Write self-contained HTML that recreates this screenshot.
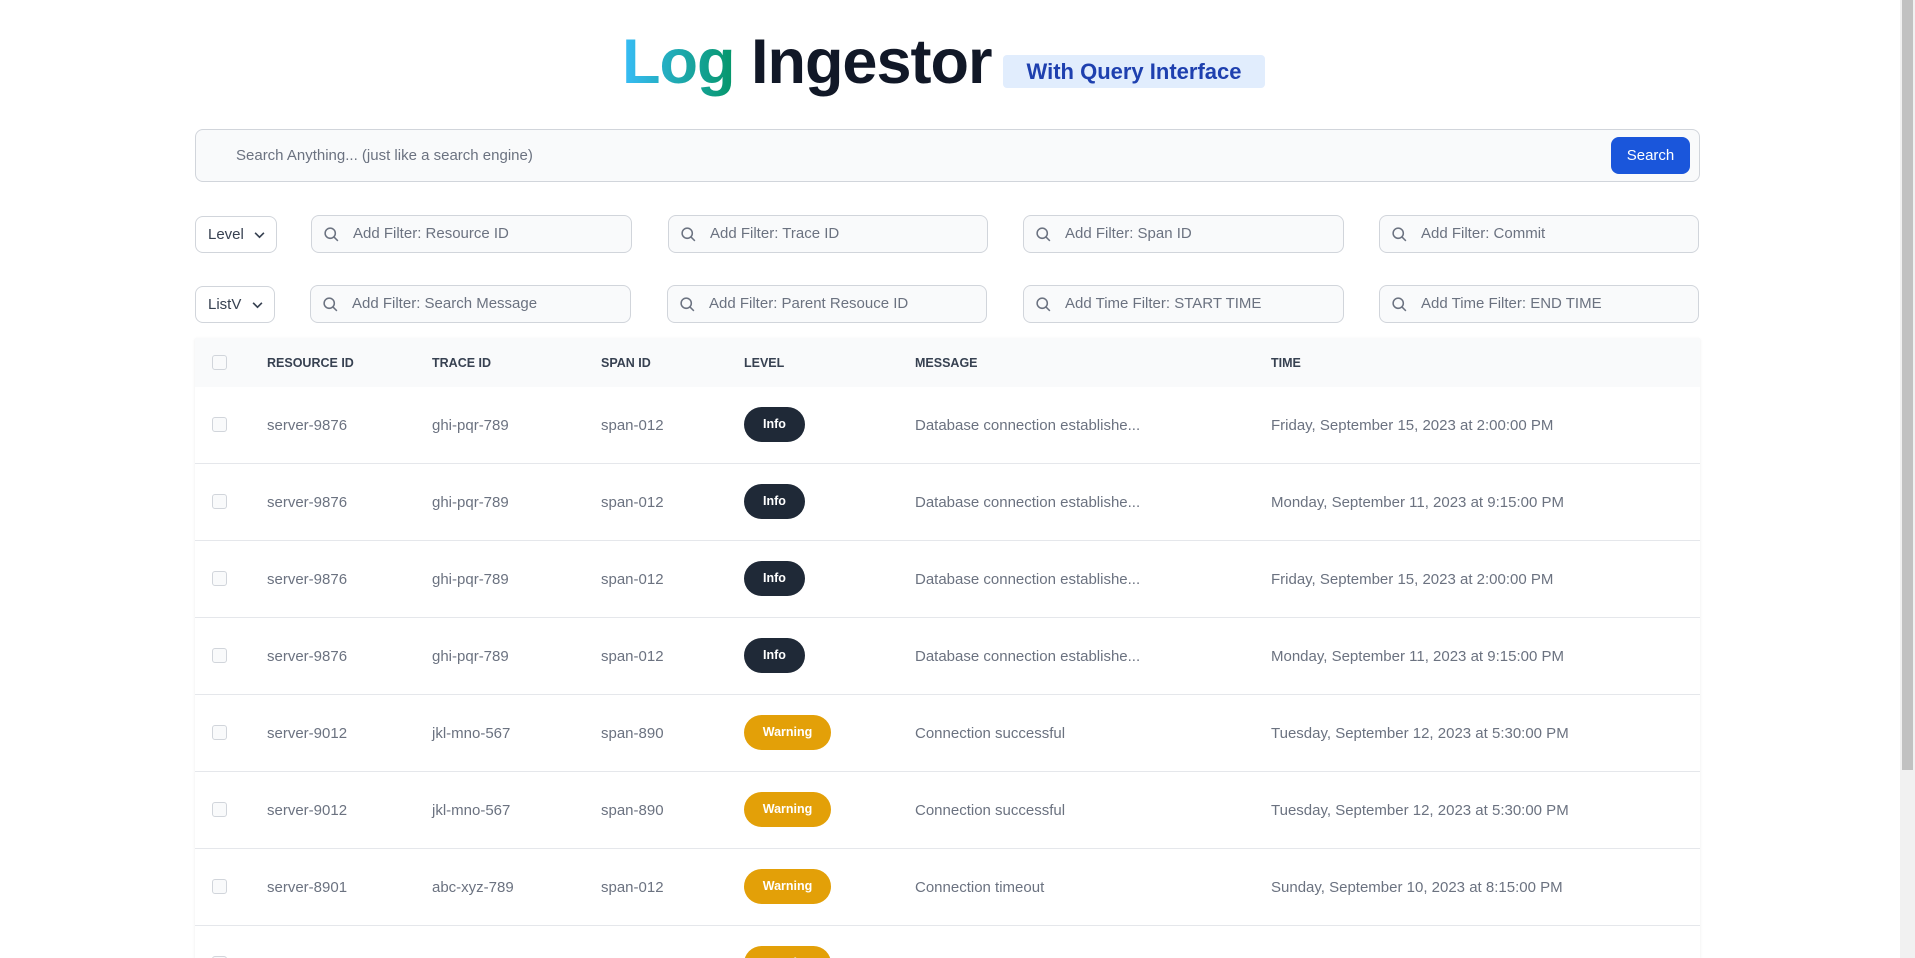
<!DOCTYPE html>
<html style="width:1915px;height:958px;overflow:hidden"><head><meta charset="utf-8"><style>
*{box-sizing:border-box;margin:0;padding:0}
body{width:1915px;height:958px;overflow:hidden;background:#fff;font-family:"Liberation Sans",sans-serif;position:relative}
.abs{position:absolute}
h1{position:absolute;left:622px;top:26px;font-size:63px;font-weight:700;color:#111827;letter-spacing:-1px;white-space:nowrap}
.grad{background:linear-gradient(90deg,#38bdf8,#059669);-webkit-background-clip:text;background-clip:text;color:transparent}
.badge{left:1003px;top:55px;width:262px;height:33px;background:#e1edfd;border-radius:4px;color:#1e40af;font-size:22px;font-weight:700;line-height:33px;text-align:center}
.search{left:195px;top:129px;width:1505px;height:53px;background:#f9fafb;border:1px solid #d1d5db;border-radius:8px}
.search span{position:absolute;left:40px;top:17px;font-size:15px;color:#6b7280}
.btn{position:absolute;left:1415px;top:7px;width:79px;height:37px;background:#1a56db;border-radius:8px;color:#fff;font-size:15px;text-align:center;line-height:37px}
.sel{height:37px;border:1px solid #d1d5db;border-radius:8px;background:#fff;font-size:15px;color:#374151;padding-left:12px;line-height:35px}
.sel svg{position:absolute;right:11px;top:14px}
.inp{height:38px;border:1px solid #d1d5db;border-radius:8px;background:#f9fafb;font-size:15px;color:#6b7280;line-height:36px;padding-left:41px}
.inp svg{position:absolute;left:11px;top:10px}
.table{left:195px;top:338px;width:1505px;height:620px;overflow:hidden;box-shadow:0 1px 3px rgba(0,0,0,.08)}
.hd{position:absolute;left:0;top:0;width:1505px;height:49px;background:#f9fafb}
.th{position:absolute;top:18px;font-size:12.5px;font-weight:700;color:#374151}
.row{position:absolute;left:0;width:1505px;height:77px;border-bottom:1px solid #e5e7eb}
.td{position:absolute;top:30px;font-size:15px;color:#6b7280;white-space:nowrap}
.cb{position:absolute;left:17px;width:15px;height:15px;border:1px solid #d1d5db;border-radius:3px;background:#f9fafb}
.lv{position:absolute;left:549px;top:20px;height:35px;border-radius:18px;color:#fff;font-size:12.5px;font-weight:700;text-align:center;line-height:35px}
.info{width:61px;background:#1f2937}.warn{width:87px;background:#e3a008}
.sb{left:1900px;top:0;width:15px;height:958px;background:#f1f1f1}
.sb div{position:absolute;left:2px;top:0;width:11px;height:770px;background:#c1c1c1}
</style></head><body>
<h1><span class="grad">Log</span> Ingestor</h1>
<div class="abs badge">With Query Interface</div>
<div class="abs search"><span>Search Anything... (just like a search engine)</span><div class="btn">Search</div></div>

<div class="abs sel" style="left:195px;top:216px;width:82px">Level<svg width="11" height="8" viewBox="0 0 10 6"><path d="M1 1l4 4 4-4" stroke="#374151" stroke-width="1.5" fill="none"/></svg></div>
<div class="abs sel" style="left:195px;top:286px;width:80px">ListV<svg width="11" height="8" viewBox="0 0 10 6"><path d="M1 1l4 4 4-4" stroke="#374151" stroke-width="1.5" fill="none"/></svg></div>

<div class="abs inp" style="left:311px;top:215px;width:321px"><svg width="17" height="17" viewBox="0 0 20 20"><circle cx="8.5" cy="8.5" r="6" stroke="#6b7280" stroke-width="1.8" fill="none"/><path d="M13 13l4.5 4.5" stroke="#6b7280" stroke-width="1.8"/></svg>Add Filter: Resource ID</div>
<div class="abs inp" style="left:668px;top:215px;width:320px"><svg width="17" height="17" viewBox="0 0 20 20"><circle cx="8.5" cy="8.5" r="6" stroke="#6b7280" stroke-width="1.8" fill="none"/><path d="M13 13l4.5 4.5" stroke="#6b7280" stroke-width="1.8"/></svg>Add Filter: Trace ID</div>
<div class="abs inp" style="left:1023px;top:215px;width:321px"><svg width="17" height="17" viewBox="0 0 20 20"><circle cx="8.5" cy="8.5" r="6" stroke="#6b7280" stroke-width="1.8" fill="none"/><path d="M13 13l4.5 4.5" stroke="#6b7280" stroke-width="1.8"/></svg>Add Filter: Span ID</div>
<div class="abs inp" style="left:1379px;top:215px;width:320px"><svg width="17" height="17" viewBox="0 0 20 20"><circle cx="8.5" cy="8.5" r="6" stroke="#6b7280" stroke-width="1.8" fill="none"/><path d="M13 13l4.5 4.5" stroke="#6b7280" stroke-width="1.8"/></svg>Add Filter: Commit</div>

<div class="abs inp" style="left:310px;top:285px;width:321px"><svg width="17" height="17" viewBox="0 0 20 20"><circle cx="8.5" cy="8.5" r="6" stroke="#6b7280" stroke-width="1.8" fill="none"/><path d="M13 13l4.5 4.5" stroke="#6b7280" stroke-width="1.8"/></svg>Add Filter: Search Message</div>
<div class="abs inp" style="left:667px;top:285px;width:320px"><svg width="17" height="17" viewBox="0 0 20 20"><circle cx="8.5" cy="8.5" r="6" stroke="#6b7280" stroke-width="1.8" fill="none"/><path d="M13 13l4.5 4.5" stroke="#6b7280" stroke-width="1.8"/></svg>Add Filter: Parent Resouce ID</div>
<div class="abs inp" style="left:1023px;top:285px;width:321px"><svg width="17" height="17" viewBox="0 0 20 20"><circle cx="8.5" cy="8.5" r="6" stroke="#6b7280" stroke-width="1.8" fill="none"/><path d="M13 13l4.5 4.5" stroke="#6b7280" stroke-width="1.8"/></svg>Add Time Filter: START TIME</div>
<div class="abs inp" style="left:1379px;top:285px;width:320px"><svg width="17" height="17" viewBox="0 0 20 20"><circle cx="8.5" cy="8.5" r="6" stroke="#6b7280" stroke-width="1.8" fill="none"/><path d="M13 13l4.5 4.5" stroke="#6b7280" stroke-width="1.8"/></svg>Add Time Filter: END TIME</div>

<div class="abs table">
<div class="hd"><div class="cb" style="top:17px"></div>
<div class="th" style="left:72px">RESOURCE ID</div><div class="th" style="left:237px">TRACE ID</div><div class="th" style="left:406px">SPAN ID</div><div class="th" style="left:549px">LEVEL</div><div class="th" style="left:720px">MESSAGE</div><div class="th" style="left:1076px">TIME</div></div>

<div class="row" style="top:49px"><div class="cb" style="top:30px"></div><div class="td" style="left:72px">server-9876</div><div class="td" style="left:237px">ghi-pqr-789</div><div class="td" style="left:406px">span-012</div><div class="lv info">Info</div><div class="td" style="left:720px">Database connection establishe...</div><div class="td" style="left:1076px">Friday, September 15, 2023 at 2:00:00 PM</div></div>
<div class="row" style="top:126px"><div class="cb" style="top:30px"></div><div class="td" style="left:72px">server-9876</div><div class="td" style="left:237px">ghi-pqr-789</div><div class="td" style="left:406px">span-012</div><div class="lv info">Info</div><div class="td" style="left:720px">Database connection establishe...</div><div class="td" style="left:1076px">Monday, September 11, 2023 at 9:15:00 PM</div></div>
<div class="row" style="top:203px"><div class="cb" style="top:30px"></div><div class="td" style="left:72px">server-9876</div><div class="td" style="left:237px">ghi-pqr-789</div><div class="td" style="left:406px">span-012</div><div class="lv info">Info</div><div class="td" style="left:720px">Database connection establishe...</div><div class="td" style="left:1076px">Friday, September 15, 2023 at 2:00:00 PM</div></div>
<div class="row" style="top:280px"><div class="cb" style="top:30px"></div><div class="td" style="left:72px">server-9876</div><div class="td" style="left:237px">ghi-pqr-789</div><div class="td" style="left:406px">span-012</div><div class="lv info">Info</div><div class="td" style="left:720px">Database connection establishe...</div><div class="td" style="left:1076px">Monday, September 11, 2023 at 9:15:00 PM</div></div>
<div class="row" style="top:357px"><div class="cb" style="top:30px"></div><div class="td" style="left:72px">server-9012</div><div class="td" style="left:237px">jkl-mno-567</div><div class="td" style="left:406px">span-890</div><div class="lv warn">Warning</div><div class="td" style="left:720px">Connection successful</div><div class="td" style="left:1076px">Tuesday, September 12, 2023 at 5:30:00 PM</div></div>
<div class="row" style="top:434px"><div class="cb" style="top:30px"></div><div class="td" style="left:72px">server-9012</div><div class="td" style="left:237px">jkl-mno-567</div><div class="td" style="left:406px">span-890</div><div class="lv warn">Warning</div><div class="td" style="left:720px">Connection successful</div><div class="td" style="left:1076px">Tuesday, September 12, 2023 at 5:30:00 PM</div></div>
<div class="row" style="top:511px"><div class="cb" style="top:30px"></div><div class="td" style="left:72px">server-8901</div><div class="td" style="left:237px">abc-xyz-789</div><div class="td" style="left:406px">span-012</div><div class="lv warn">Warning</div><div class="td" style="left:720px">Connection timeout</div><div class="td" style="left:1076px">Sunday, September 10, 2023 at 8:15:00 PM</div></div>
<div class="row" style="top:588px"><div class="cb" style="top:30px"></div><div class="lv warn">Warning</div></div>
</div>
<div class="abs sb"><div></div></div>
</body></html>
